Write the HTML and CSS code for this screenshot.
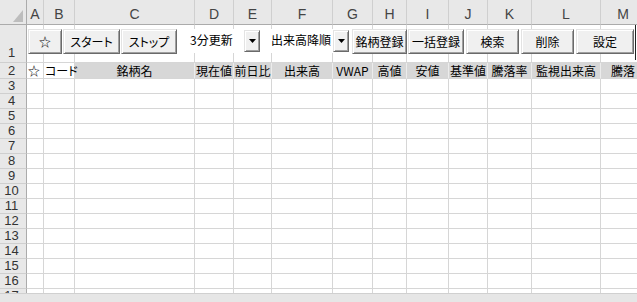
FILE: index.html
```html
<!DOCTYPE html>
<html lang="ja">
<head>
<meta charset="utf-8">
<title>銘柄監視シート</title>
<link rel="stylesheet" href="styles.css">
</head>
<body>
<div class="sheet">
  <div class="grid">
    <div class="corner"><svg width="10" height="12" viewBox="0 0 10 12"><polygon points="10,0 10,12 0,12" fill="#bdbdbd"/></svg></div>
    <div class="ch">A</div><div class="ch">B</div><div class="ch">C</div><div class="ch">D</div><div class="ch">E</div><div class="ch">F</div><div class="ch">G</div><div class="ch">H</div><div class="ch">I</div><div class="ch">J</div><div class="ch">K</div><div class="ch">L</div><div class="ch">M</div>

    <div class="rh rh1">1</div><div></div><div></div><div></div><div></div><div></div><div></div><div></div><div></div><div></div><div></div><div></div><div></div><div></div>

    <div class="rh">2</div><div class="t">☆</div><div class="t">コード</div><div class="hd">銘柄名</div><div class="hd">現在値</div><div class="hd">前日比</div><div class="hd">出来高</div><div class="hd">VWAP</div><div class="hd">高値</div><div class="hd">安値</div><div class="hd">基準値</div><div class="hd">騰落率</div><div class="hd">監視出来高</div><div class="hd">騰落</div>

    <div class="rh">3</div><div></div><div></div><div></div><div></div><div></div><div></div><div></div><div></div><div></div><div></div><div></div><div></div><div></div>
    <div class="rh">4</div><div></div><div></div><div></div><div></div><div></div><div></div><div></div><div></div><div></div><div></div><div></div><div></div><div></div>
    <div class="rh">5</div><div></div><div></div><div></div><div></div><div></div><div></div><div></div><div></div><div></div><div></div><div></div><div></div><div></div>
    <div class="rh">6</div><div></div><div></div><div></div><div></div><div></div><div></div><div></div><div></div><div></div><div></div><div></div><div></div><div></div>
    <div class="rh">7</div><div></div><div></div><div></div><div></div><div></div><div></div><div></div><div></div><div></div><div></div><div></div><div></div><div></div>
    <div class="rh">8</div><div></div><div></div><div></div><div></div><div></div><div></div><div></div><div></div><div></div><div></div><div></div><div></div><div></div>
    <div class="rh">9</div><div></div><div></div><div></div><div></div><div></div><div></div><div></div><div></div><div></div><div></div><div></div><div></div><div></div>
    <div class="rh">10</div><div></div><div></div><div></div><div></div><div></div><div></div><div></div><div></div><div></div><div></div><div></div><div></div><div></div>
    <div class="rh">11</div><div></div><div></div><div></div><div></div><div></div><div></div><div></div><div></div><div></div><div></div><div></div><div></div><div></div>
    <div class="rh">12</div><div></div><div></div><div></div><div></div><div></div><div></div><div></div><div></div><div></div><div></div><div></div><div></div><div></div>
    <div class="rh">13</div><div></div><div></div><div></div><div></div><div></div><div></div><div></div><div></div><div></div><div></div><div></div><div></div><div></div>
    <div class="rh">14</div><div></div><div></div><div></div><div></div><div></div><div></div><div></div><div></div><div></div><div></div><div></div><div></div><div></div>
    <div class="rh">15</div><div></div><div></div><div></div><div></div><div></div><div></div><div></div><div></div><div></div><div></div><div></div><div></div><div></div>
    <div class="rh">16</div><div></div><div></div><div></div><div></div><div></div><div></div><div></div><div></div><div></div><div></div><div></div><div></div><div></div>
    <div class="rh">17</div><div></div><div></div><div></div><div></div><div></div><div></div><div></div><div></div><div></div><div></div><div></div><div></div><div></div>
  </div>

  <div class="toolbar">
    <button class="btn w-star">☆</button>
    <button class="btn w-start">スタート</button>
    <button class="btn w-stop">ストップ</button>
    <div class="combo c1"><span class="combo-text">3分更新</span><span class="combo-arrow"><svg width="7" height="4" viewBox="0 0 7 4"><polygon points="0,0 7,0 3.5,4" fill="#000"/></svg></span></div>
    <div class="combo c2"><span class="combo-text">出来高降順</span><span class="combo-arrow"><svg width="7" height="4" viewBox="0 0 7 4"><polygon points="0,0 7,0 3.5,4" fill="#000"/></svg></span></div>
    <button class="btn w-reg">銘柄登録</button>
    <button class="btn w-bulk">一括登録</button>
    <button class="btn w-find">検索</button>
    <button class="btn w-del">削除</button>
    <button class="btn w-set">設定</button>
    <div class="edge"></div>
  </div>
</div>
<div class="bottombar"></div>
</body>
</html>
```

FILE: styles.css
```css
html, body {
  margin: 0;
  padding: 0;
  background: #fff;
  overflow: hidden;
}
body {
  width: 637px;
  height: 302px;
  font-family: "Noto Sans CJK JP", "Noto Sans", sans-serif;
  font-feature-settings: "palt";
  color: #000;
}
.sheet {
  position: relative;
  height: 293px;
  overflow: hidden;
}
.grid {
  display: grid;
  grid-template-columns: 27px 17px 31px 120px 39px 38px 61px 40px 34px 42px 39px 44px 69px 45px;
  grid-template-rows: 25px 38px 16px repeat(15, 15px);
}
.grid > div {
  box-sizing: border-box;
  border-right: 1px solid #d6d6d6;
  border-bottom: 1px solid #d6d6d6;
  white-space: nowrap;
  font-size: 12px;
  line-height: 15px;
}
.grid > .corner {
  background: #e8e8e8;
  border-right-color: #ababab;
  border-bottom-color: #ababab;
  display: flex;
  justify-content: flex-end;
  align-items: flex-end;
  padding: 0 3px 2px 0;
}
.grid > .ch {
  background: #e8e8e8;
  border-right-color: #cfcfcf;
  border-bottom-color: #ababab;
  font-family: "Liberation Sans", sans-serif;
  font-size: 14px;
  line-height: 16px;
  color: #444;
  display: flex;
  justify-content: center;
  align-items: flex-end;
  padding-bottom: 2px;
}
.grid > .rh {
  background: #e8e8e8;
  border-right-color: #ababab;
  border-bottom-color: #cfcfcf;
  font-family: "Liberation Sans", sans-serif;
  font-size: 13px;
  line-height: 14px;
  color: #333;
  display: flex;
  justify-content: center;
  align-items: center;
  padding-right: 3px;
}
.grid > .rh1 {
  align-items: flex-end;
  padding-bottom: 2px;
}
.grid > .t {
  padding-left: 1px;
  position: relative;
  z-index: 1;
}
.grid > .hd {
  background: #d7d7d7;
  border-right-color: #ececec;
  text-align: center;
  overflow: hidden;
}

.toolbar {
  position: absolute;
  top: 29px;
  left: 28px;
  height: 25px;
  display: flex;
  align-items: stretch;
}
.btn {
  box-sizing: border-box;
  height: 25px;
  margin: 0 1px 0 0;
  padding: 0;
  font-family: "Noto Sans CJK JP", sans-serif;
  font-feature-settings: "palt";
  font-size: 12px;
  color: #000;
  background: #f0f0f0;
  border-style: solid;
  border-width: 1px;
  border-color: #e3e3e3 #6a6a6a #6a6a6a #e3e3e3;
  box-shadow: inset 1px 1px 0 #fff, inset -1px -1px 0 #a0a0a0;
}
.w-star { width: 34px; }
.w-start { width: 57px; }
.w-stop { width: 56px; margin-right: 3px; }
.w-reg { width: 55px; }
.w-bulk { width: 56px; margin-right: 2px; }
.w-find { width: 53px; margin-right: 2px; }
.w-del { width: 53px; margin-right: 2px; }
.w-set { width: 58px; }

.combo {
  display: flex;
  height: 24px;
  margin-right: 1px;
  background: #fff;
}
.c1 { width: 80px; }
.c2 { width: 88px; margin-right: 3px; }
.combo-text {
  flex: 1;
  font-size: 12px;
  line-height: 22px;
  padding-left: 10px;
  white-space: nowrap;
  overflow: hidden;
}
.combo-arrow {
  box-sizing: border-box;
  width: 16px;
  height: 22px;
  margin-top: 1px;
  display: flex;
  align-items: center;
  justify-content: center;
  background: #f0f0f0;
  border-style: solid;
  border-width: 1px;
  border-color: #e3e3e3 #6a6a6a #6a6a6a #e3e3e3;
  box-shadow: inset 1px 1px 0 #fff, inset -1px -1px 0 #a0a0a0;
}
.edge {
  width: 1px;
  height: 35px;
  margin-top: -4px;
  background: #222;
}
.bottombar {
  height: 9px;
  background: #e6e6e6;
  border-top: 1px solid #d0d0d0;
}
```
